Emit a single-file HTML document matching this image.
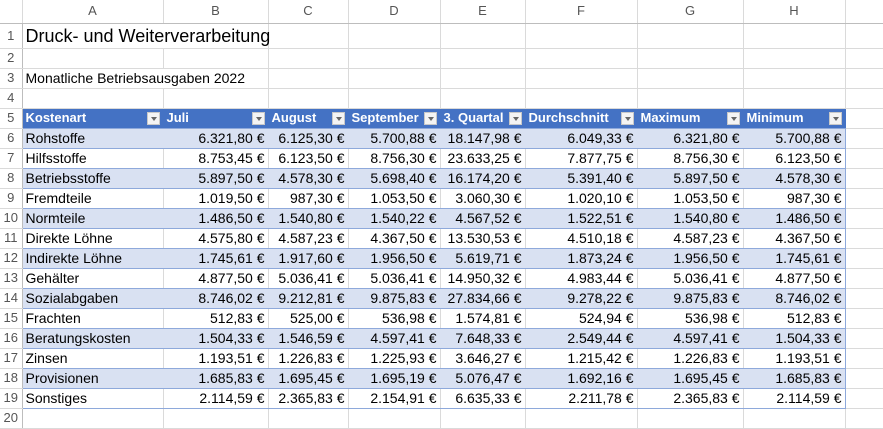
<!DOCTYPE html><html><head><style>
body{margin:0;width:883px;height:429px;overflow:hidden;background:#fff;font-family:"Liberation Sans",Arial,sans-serif;}
table{border-collapse:collapse;table-layout:fixed;position:absolute;left:0;top:0;width:883px}
td{padding:0 3px;font-size:14px;color:#000;white-space:nowrap;overflow:hidden;border-right:1px solid #dadada;border-bottom:1px solid #dadada;height:20px;box-sizing:border-box;line-height:18px}
td.rh{text-align:center;color:#555;font-size:13px;padding:0;border-right:1px solid #bdbdbd}
tr.ch td{color:#555;text-align:center;font-size:13px;height:23px;border-bottom:1px solid #bdbdbd}
tr.h td.d{background:#4472C4;color:#fff;font-weight:bold;font-size:13px;border-right:1px solid #4472C4;border-bottom:1px solid #8EA9DB;position:relative}
tr.b td.d{background:#D9E1F2;border-right:1px solid #D9E1F2}
tr.t td.d{border-bottom:1px solid #8EA9DB}
td.n{text-align:right}
td.d.last{border-right:1px solid #8EA9DB!important}
.dd{position:absolute;right:3px;top:3px;width:13px;height:13px;background:#f4f4f4;border:1px solid #c8c8c8;box-sizing:border-box}
.dd:after{content:"";position:absolute;left:3px;top:4px;border-left:3px solid transparent;border-right:3px solid transparent;border-top:4px solid #666}
</style></head><body>
<table>
<colgroup><col style="width:22px"><col style="width:141px"><col style="width:105px"><col style="width:80px"><col style="width:92px"><col style="width:85px"><col style="width:112px"><col style="width:106px"><col style="width:102px"><col style="width:38px"></colgroup>
<tr class="ch"><td style="background:#fff"></td><td>A</td><td>B</td><td>C</td><td>D</td><td>E</td><td>F</td><td>G</td><td>H</td><td></td></tr>
<tr><td class="rh" style="height:25px">1</td><td style="font-size:18px;overflow:visible;border-right:none;height:25px">Druck- und Weiterverarbeitung</td><td></td><td></td><td></td><td></td><td></td><td></td><td></td><td></td></tr>
<tr><td class="rh">2</td><td></td><td></td><td></td><td></td><td></td><td></td><td></td><td></td><td></td></tr>
<tr><td class="rh">3</td><td style="overflow:visible;border-right:none">Monatliche Betriebsausgaben 2022</td><td></td><td></td><td></td><td></td><td></td><td></td><td></td><td></td></tr>
<tr><td class="rh">4</td><td></td><td></td><td></td><td></td><td></td><td></td><td></td><td></td><td></td></tr>
<tr class="h"><td class="rh">5</td><td class="d">Kostenart<span class="dd"></span></td><td class="d">Juli<span class="dd"></span></td><td class="d">August<span class="dd"></span></td><td class="d">September<span class="dd"></span></td><td class="d">3. Quartal<span class="dd"></span></td><td class="d">Durchschnitt<span class="dd"></span></td><td class="d">Maximum<span class="dd"></span></td><td class="d">Minimum<span class="dd"></span></td><td></td></tr>
<tr class="t b"><td class="rh">6</td><td class="d">Rohstoffe</td><td class="d n">6.321,80 €</td><td class="d n">6.125,30 €</td><td class="d n">5.700,88 €</td><td class="d n">18.147,98 €</td><td class="d n">6.049,33 €</td><td class="d n">6.321,80 €</td><td class="d n last">5.700,88 €</td><td></td></tr>
<tr class="t"><td class="rh">7</td><td class="d">Hilfsstoffe</td><td class="d n">8.753,45 €</td><td class="d n">6.123,50 €</td><td class="d n">8.756,30 €</td><td class="d n">23.633,25 €</td><td class="d n">7.877,75 €</td><td class="d n">8.756,30 €</td><td class="d n last">6.123,50 €</td><td></td></tr>
<tr class="t b"><td class="rh">8</td><td class="d">Betriebsstoffe</td><td class="d n">5.897,50 €</td><td class="d n">4.578,30 €</td><td class="d n">5.698,40 €</td><td class="d n">16.174,20 €</td><td class="d n">5.391,40 €</td><td class="d n">5.897,50 €</td><td class="d n last">4.578,30 €</td><td></td></tr>
<tr class="t"><td class="rh">9</td><td class="d">Fremdteile</td><td class="d n">1.019,50 €</td><td class="d n">987,30 €</td><td class="d n">1.053,50 €</td><td class="d n">3.060,30 €</td><td class="d n">1.020,10 €</td><td class="d n">1.053,50 €</td><td class="d n last">987,30 €</td><td></td></tr>
<tr class="t b"><td class="rh">10</td><td class="d">Normteile</td><td class="d n">1.486,50 €</td><td class="d n">1.540,80 €</td><td class="d n">1.540,22 €</td><td class="d n">4.567,52 €</td><td class="d n">1.522,51 €</td><td class="d n">1.540,80 €</td><td class="d n last">1.486,50 €</td><td></td></tr>
<tr class="t"><td class="rh">11</td><td class="d">Direkte Löhne</td><td class="d n">4.575,80 €</td><td class="d n">4.587,23 €</td><td class="d n">4.367,50 €</td><td class="d n">13.530,53 €</td><td class="d n">4.510,18 €</td><td class="d n">4.587,23 €</td><td class="d n last">4.367,50 €</td><td></td></tr>
<tr class="t b"><td class="rh">12</td><td class="d">Indirekte Löhne</td><td class="d n">1.745,61 €</td><td class="d n">1.917,60 €</td><td class="d n">1.956,50 €</td><td class="d n">5.619,71 €</td><td class="d n">1.873,24 €</td><td class="d n">1.956,50 €</td><td class="d n last">1.745,61 €</td><td></td></tr>
<tr class="t"><td class="rh">13</td><td class="d">Gehälter</td><td class="d n">4.877,50 €</td><td class="d n">5.036,41 €</td><td class="d n">5.036,41 €</td><td class="d n">14.950,32 €</td><td class="d n">4.983,44 €</td><td class="d n">5.036,41 €</td><td class="d n last">4.877,50 €</td><td></td></tr>
<tr class="t b"><td class="rh">14</td><td class="d">Sozialabgaben</td><td class="d n">8.746,02 €</td><td class="d n">9.212,81 €</td><td class="d n">9.875,83 €</td><td class="d n">27.834,66 €</td><td class="d n">9.278,22 €</td><td class="d n">9.875,83 €</td><td class="d n last">8.746,02 €</td><td></td></tr>
<tr class="t"><td class="rh">15</td><td class="d">Frachten</td><td class="d n">512,83 €</td><td class="d n">525,00 €</td><td class="d n">536,98 €</td><td class="d n">1.574,81 €</td><td class="d n">524,94 €</td><td class="d n">536,98 €</td><td class="d n last">512,83 €</td><td></td></tr>
<tr class="t b"><td class="rh">16</td><td class="d">Beratungskosten</td><td class="d n">1.504,33 €</td><td class="d n">1.546,59 €</td><td class="d n">4.597,41 €</td><td class="d n">7.648,33 €</td><td class="d n">2.549,44 €</td><td class="d n">4.597,41 €</td><td class="d n last">1.504,33 €</td><td></td></tr>
<tr class="t"><td class="rh">17</td><td class="d">Zinsen</td><td class="d n">1.193,51 €</td><td class="d n">1.226,83 €</td><td class="d n">1.225,93 €</td><td class="d n">3.646,27 €</td><td class="d n">1.215,42 €</td><td class="d n">1.226,83 €</td><td class="d n last">1.193,51 €</td><td></td></tr>
<tr class="t b"><td class="rh">18</td><td class="d">Provisionen</td><td class="d n">1.685,83 €</td><td class="d n">1.695,45 €</td><td class="d n">1.695,19 €</td><td class="d n">5.076,47 €</td><td class="d n">1.692,16 €</td><td class="d n">1.695,45 €</td><td class="d n last">1.685,83 €</td><td></td></tr>
<tr class="t"><td class="rh">19</td><td class="d">Sonstiges</td><td class="d n">2.114,59 €</td><td class="d n">2.365,83 €</td><td class="d n">2.154,91 €</td><td class="d n">6.635,33 €</td><td class="d n">2.211,78 €</td><td class="d n">2.365,83 €</td><td class="d n last">2.114,59 €</td><td></td></tr>
<tr><td class="rh">20</td><td></td><td></td><td></td><td></td><td></td><td></td><td></td><td></td><td></td></tr>
</table>
</body></html>
